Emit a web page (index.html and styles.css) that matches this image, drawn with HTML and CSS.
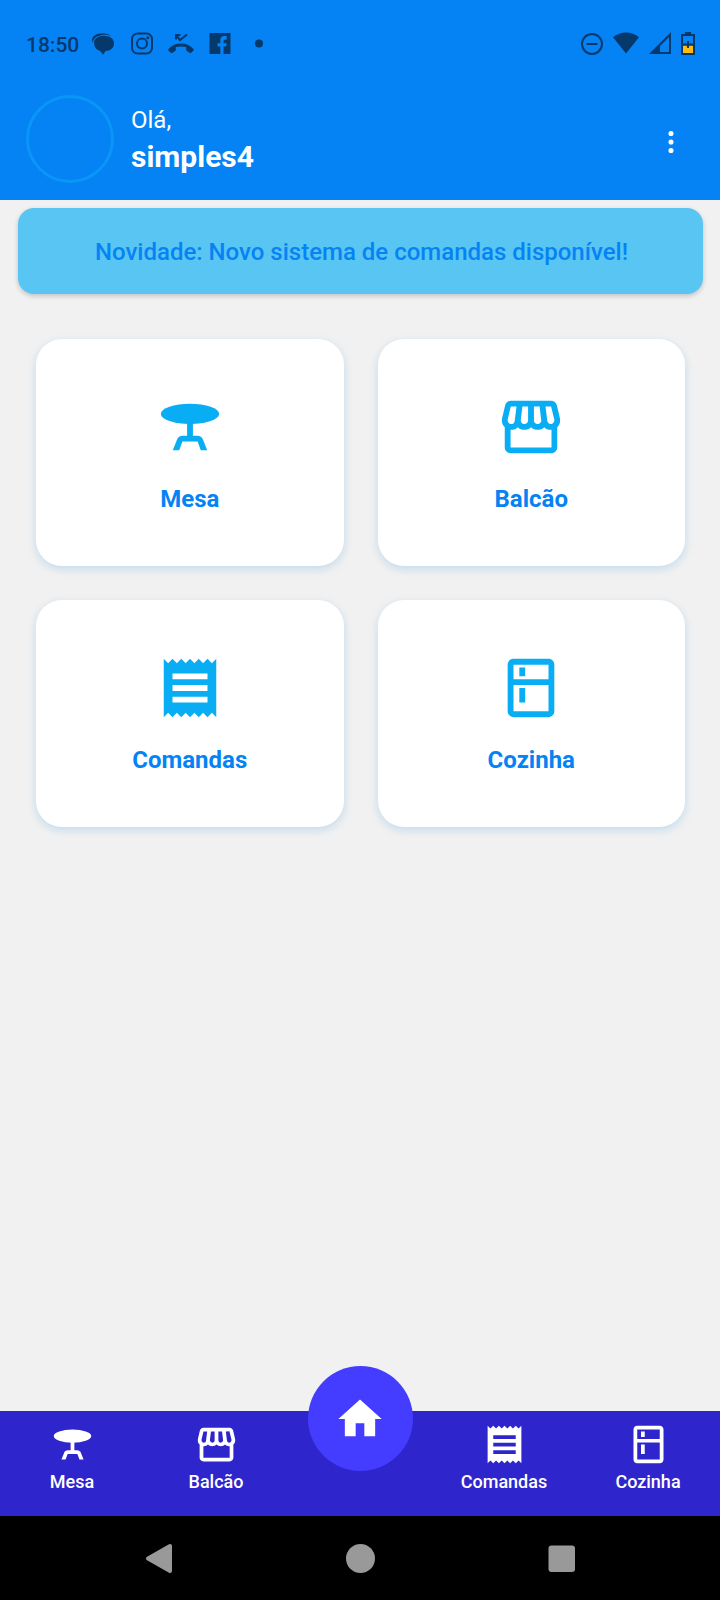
FILE: index.html
```html
<!DOCTYPE html>
<html lang="pt-BR">
<head>
  <meta charset="utf-8">
  <meta name="viewport" content="width=device-width, initial-scale=1">
  <title>Comandas</title>
  <link rel="stylesheet" href="styles.css">
</head>
<body>
  <svg class="sprite" aria-hidden="true">
    <symbol id="table" viewBox="0 0 24 24">
      <ellipse cx="12" cy="7.5" rx="10" ry="3.5"/>
      <path d="M11 10.5h2V15h1.6c.8 0 1.500.5 1.800 1.200L17.900 20h-2.200l-1.100-3H9.400l-1.100 3H6.100l1.500-3.800c.3-.7 1-1.200 1.800-1.200H11z"/>
    </symbol>
    <symbol id="store" viewBox="0 0 24 24">
      <path d="M5.06 3C4.63 3 4.22 3.14 3.84 3.42S3.24 4.06 3.14 4.5L2.11 8.91C1.86 10 2.06 10.92 2.72 11.77L3 12.05V19C3 19.5 3.2 20 3.61 20.39S4.5 21 5 21H19C19.5 21 20 20.8 20.39 20.39S21 19.5 21 19V12.05L21.28 11.77C21.94 10.92 22.14 10 21.89 8.91L20.86 4.5C20.73 4.06 20.5 3.7 20.13 3.42C19.77 3.14 19.38 3 18.94 3H5.06M18.89 4.97L19.97 9.38C20.06 9.81 19.97 10.2 19.69 10.55C19.44 10.86 19.13 11 18.75 11C18.44 11 18.17 10.9 17.95 10.66C17.73 10.43 17.61 10.16 17.58 9.84L16.97 5L18.89 4.97M5.06 5H7.03L6.42 9.84C6.3 10.63 5.91 11 5.25 11C4.84 11 4.53 10.86 4.31 10.55C4.03 10.2 3.94 9.81 4.03 9.38L5.06 5M9.05 5H11V9.7C11 10.05 10.89 10.35 10.64 10.62C10.39 10.88 10.08 11 9.7 11C9.36 11 9.07 10.88 8.84 10.59C8.61 10.3 8.5 10 8.5 9.66V9.5L9.05 5M13 5H14.95L15.5 9.5C15.58 9.92 15.5 10.27 15.21 10.57C14.95 10.87 14.61 11 14.2 11C13.89 11 13.61 10.88 13.36 10.62C13.11 10.35 13 10.05 13 9.7V5M7.45 12.05C8.08 12.65 8.86 12.95 9.7 12.95C10.6 12.95 11.37 12.65 12 12.05C12.69 12.65 13.45 12.95 14.3 12.95C15.17 12.95 15.92 12.65 16.55 12.05C17.11 12.65 17.86 12.95 18.8 12.95H19.03V19H5V12.95H5.25C6.16 12.95 6.89 12.65 7.45 12.05"/>
    </symbol>
    <symbol id="receipt" viewBox="0 0 24 24">
      <path d="M18 17H6v-2h12v2zm0-4H6v-2h12v2zm0-4H6V7h12v2zM3 22l1.5-1.5L6 22l1.5-1.5L9 22l1.5-1.5L12 22l1.5-1.5L15 22l1.5-1.5L18 22l1.5-1.5L21 22V2l-1.5 1.5L18 2l-1.5 1.5L15 2l-1.5 1.5L12 2l-1.5 1.5L9 2 7.5 3.5 6 2 4.5 3.5 3 2v20z"/>
    </symbol>
    <symbol id="fridge" viewBox="0 0 24 24">
      <path d="M18 2.01L6 2c-1.1 0-2 .89-2 2v16c0 1.1.9 2 2 2h12c1.1 0 2-.9 2-2V4c0-1.11-.9-1.99-2-1.99zM18 20H6v-9.02h12V20zm0-11H6V4h12v5zM8 5h2v3H8V5zm0 7h2v5H8v-5z"/>
    </symbol>
  </svg>

  <header class="header">
    <div class="status">
      <div class="status-group">
        <time class="clock">18:50</time>
        <svg class="status-icon" viewBox="0 0 26 26" aria-hidden="true">
          <path d="M3 12C0 7 4.500 2.500 11 2.500c5 0 8 .6 10 2.300-3-1.200-7-1.200-10-.6C6 5.200 3 8 3 12z"/>
          <path d="M4 12C4 7.500 8.500 4.800 14 4.800S24 7.500 24 12.200s-3.500 7.600-8.500 7.800c-.7 1.400-1.500 2.600-2.700 3.800-.7-1.500-1.500-2.600-2.600-3.800C7 19 4 16.500 4 12z"/>
        </svg>
        <svg class="status-icon" viewBox="0 0 26 26" aria-hidden="true">
          <rect class="line" x="3" y="2.500" width="20" height="20" rx="5.500"/>
          <circle class="line" cx="13" cy="12.500" r="5"/>
          <circle cx="18.800" cy="6.800" r="1.500"/>
        </svg>
        <svg class="status-icon" viewBox="0 0 26 26" aria-hidden="true">
          <path d="M.6 18C7 10.800 19 10.800 25.400 18c.5.700.5 1.200 0 1.700l-2.200 2c-.6.500-1.100.5-1.700.1l-2.700-1.800c-.4-.3-.6-.7-.6-1.200v-2.700c-3.400-.9-7-.9-10.400 0v2.700c0 .5-.2.900-.6 1.200l-2.700 1.800c-.6.400-1.100.4-1.700-.1l-2.200-2c-.5-.5-.5-1 0-1.700z"/>
          <path class="line" d="M8 8.500V4h4.500M8.500 4.500L12 9l7-5.500"/>
        </svg>
        <svg class="status-icon" viewBox="0 0 26 26" aria-hidden="true">
          <path d="M2.500 2h21v21h-7v-7.500h2.700l.4-3.200h-3.100v-2c0-.9.300-1.500 1.600-1.500h1.600V5c-.3 0-1.300-.1-2.400-.1-2.400 0-4 1.400-4 4.100v3.300h-2.800v3.200h2.800V23H2.500z"/>
        </svg>
        <svg class="status-icon" viewBox="0 0 26 26" aria-hidden="true"><circle cx="13" cy="12.500" r="4"/></svg>
      </div>
      <div class="status-group status-right">
        <svg class="status-icon" viewBox="0 0 26 26" aria-hidden="true">
          <circle class="line" cx="13" cy="13" r="10"/><path class="line" d="M7.500 13h11"/>
        </svg>
        <svg class="status-icon" viewBox="0 0 26 26" aria-hidden="true">
          <path d="M0 6.300C7.500-.2 18.500-.2 26 6.300L13 22.500z"/>
        </svg>
        <svg class="status-icon" viewBox="0 0 26 26" aria-hidden="true">
          <path fill-rule="evenodd" d="M24 1v22H2zM22 6L13 15v6h9z"/>
        </svg>
        <svg class="battery" viewBox="0 0 14 26" aria-hidden="true">
          <path fill-rule="evenodd" d="M4 1h6v2h4v21H0V3h4zM2 5v17h10V5z"/>
          <path class="charge" d="M2 15h10v7H2z"/>
          <path d="M2 12.500h10v2H2zM6 10h2v7H6z"/>
        </svg>
      </div>
    </div>

    <div class="profile">
      <div class="avatar"></div>
      <div class="greeting">
        <span class="hello">Olá,</span>
        <strong class="user">simples4</strong>
      </div>
      <button class="more" type="button" aria-label="Mais opções">
        <svg class="more-icon" viewBox="0 0 24 24" aria-hidden="true">
          <circle cx="12" cy="6" r="1.800"/><circle cx="12" cy="12" r="1.800"/><circle cx="12" cy="18" r="1.800"/>
        </svg>
      </button>
    </div>
  </header>

  <main class="content">
    <p class="banner">Novidade: Novo sistema de comandas disponível!</p>
    <div class="cards">
      <button class="card" type="button"><svg class="card-icon" aria-hidden="true"><use href="#table"/></svg><span>Mesa</span></button>
      <button class="card" type="button"><svg class="card-icon" aria-hidden="true"><use href="#store"/></svg><span>Balcão</span></button>
      <button class="card" type="button"><svg class="card-icon" aria-hidden="true"><use href="#receipt"/></svg><span>Comandas</span></button>
      <button class="card" type="button"><svg class="card-icon" aria-hidden="true"><use href="#fridge"/></svg><span>Cozinha</span></button>
    </div>
  </main>

  <nav class="tabs">
    <a class="tab" href="#mesa"><svg class="tab-icon" aria-hidden="true"><use href="#table"/></svg><span>Mesa</span></a>
    <a class="tab" href="#balcao"><svg class="tab-icon" aria-hidden="true"><use href="#store"/></svg><span>Balcão</span></a>
    <div class="tab-home">
      <a class="home" href="#inicio" aria-label="Início">
        <svg class="home-icon" viewBox="0 0 24 24" aria-hidden="true"><path d="M10 20v-6h4v6h5v-8h3L12 3 2 12h3v8z"/></svg>
      </a>
    </div>
    <a class="tab" href="#comandas"><svg class="tab-icon" aria-hidden="true"><use href="#receipt"/></svg><span>Comandas</span></a>
    <a class="tab" href="#cozinha"><svg class="tab-icon" aria-hidden="true"><use href="#fridge"/></svg><span>Cozinha</span></a>
  </nav>

  <div class="system">
    <button class="system-key" type="button" aria-label="Voltar">
      <svg class="system-icon" viewBox="0 0 30 30" aria-hidden="true"><path class="soft" d="M4 15.500L26 3v25z"/></svg>
    </button>
    <button class="system-key" type="button" aria-label="Tela inicial">
      <svg class="system-icon" viewBox="0 0 30 30" aria-hidden="true"><circle cx="15.500" cy="15.500" r="14.500"/></svg>
    </button>
    <button class="system-key" type="button" aria-label="Recentes">
      <svg class="system-icon" viewBox="0 0 30 30" aria-hidden="true"><rect x="2.500" y="2.500" width="26.500" height="26.500" rx="3"/></svg>
    </button>
  </div>
</body>
</html>
```
FILE: styles.css
```css
* {
  box-sizing: border-box;
}

body {
  display: flex;
  flex-direction: column;
  min-height: 100vh;
  margin: 0;
  background: #f1f1f1;
  font-family: Roboto, "Liberation Sans", sans-serif;
}

button {
  padding: 0;
  border: 0;
  background: none;
  font: inherit;
  cursor: pointer;
}

svg {
  display: block;
  fill: currentColor;
}

.sprite {
  position: absolute;
  width: 0;
  height: 0;
}

.header {
  padding: 28px 25px 17px 26px;
  background: #0583f4;
  color: #fff;
}

/* Status bar */
.status {
  display: flex;
  justify-content: space-between;
  height: 32px;
  color: #05396b;
}

.status-group {
  display: flex;
  align-items: center;
  gap: 13px;
}

.status-right {
  gap: 8px;
}

.clock {
  margin-right: -2px;
  padding-top: 2px;
  font-size: 21px;
  font-weight: 500;
  line-height: 24px;
}

.status-icon {
  width: 26px;
  height: 26px;
}

.line {
  fill: none;
  stroke: currentColor;
  stroke-width: 2;
}

.battery {
  width: 14px;
  height: 26px;
}

.charge {
  fill: #fdbd10;
}

/* Profile row */
.profile {
  display: flex;
  align-items: center;
  gap: 17px;
  padding-top: 35px;
}

.avatar {
  width: 88px;
  height: 88px;
  border: 3px solid #0996f7;
  border-radius: 50%;
}

.greeting {
  display: flex;
  flex: 1;
  flex-direction: column;
  gap: 3px;
}

.hello {
  font-size: 24px;
  line-height: 32px;
}

.user {
  font-size: 30px;
  line-height: 36px;
}

.more {
  padding: 11px 7px 6px;
  color: #fff;
}

.more-icon {
  width: 34px;
  height: 34px;
}

/* Content */
.content {
  flex: 1;
  padding: 8px 17px 8px 18px;
}

.banner {
  margin: 0;
  padding: 30px 17px 28px 19px;
  border-radius: 16px;
  background: #59c5f3;
  box-shadow: 0 2px 5px rgba(0, 0, 0, 0.2);
  color: #0583f4;
  font-size: 24px;
  font-weight: 500;
  line-height: 28px;
  text-align: center;
}

.cards {
  display: grid;
  grid-template-columns: 1fr 1fr;
  gap: 34px;
  padding: 45px 18px;
}

.card {
  display: flex;
  flex-direction: column;
  align-items: center;
  gap: 23px;
  padding: 53px 16px;
  border-radius: 26px;
  background: #fff;
  box-shadow: 0 3px 10px rgba(5, 131, 214, 0.2);
  color: #0583f4;
  font-size: 24px;
  font-weight: 700;
  line-height: 28px;
}

.card-icon {
  width: 70px;
  height: 70px;
  color: #08adf4;
}

/* Tab bar */
.tabs {
  display: grid;
  grid-template-columns: repeat(5, 1fr);
  height: 105px;
  background: #2e26cc;
  color: #fff;
}

.tab {
  display: flex;
  flex-direction: column;
  align-items: center;
  gap: 4px;
  padding-top: 11px;
  color: #fff;
  font-size: 18px;
  font-weight: 500;
  line-height: 22px;
  text-decoration: none;
}

.tab-icon {
  width: 45px;
  height: 45px;
}

.tab-home {
  display: flex;
  justify-content: center;
}

.home {
  display: grid;
  place-items: center;
  width: 105px;
  height: 105px;
  margin-top: -45px;
  border-radius: 50%;
  background: #443cff;
  color: #fff;
}

.home-icon {
  width: 52px;
  height: 52px;
}

/* System navigation */
.system {
  display: flex;
  justify-content: center;
  gap: 171px;
  height: 84px;
  background: #000;
  color: #999;
}

.system-key {
  color: inherit;
}

.system-icon {
  width: 30px;
  height: 30px;
}

.soft {
  stroke: currentColor;
  stroke-width: 4;
  stroke-linejoin: round;
}
```
